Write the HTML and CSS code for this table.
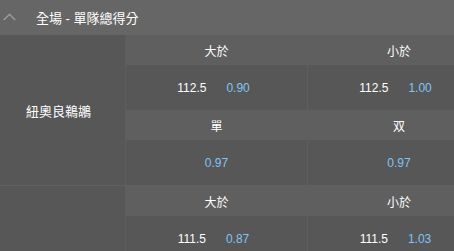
FILE: index.html
```html
<!DOCTYPE html>
<html>
<head>
<meta charset="utf-8">
<link rel="stylesheet" href="styles.css">
</head>
<body>
<div class="page">
  <div class="header">
    <svg class="chev" width="13" height="8" viewBox="0 0 13 8"><polyline points="0.8,7 6.5,1.2 12.2,7" fill="none" stroke="#9a9a9a" stroke-width="1.5"/></svg>
    <span class="title">全場 - 單隊總得分</span>
  </div>
  <div class="group">
    <div class="team">紐奧良鵜鶘</div>
    <div class="lines">
      <div class="row sub"><div class="cell">大於</div><div class="cell">小於</div></div>
      <div class="row val">
        <div class="cell pair"><span class="line">112.5</span><span class="odds">0.90</span></div>
        <div class="cell pair"><span class="line">112.5</span><span class="odds">1.00</span></div>
      </div>
      <div class="row sub"><div class="cell">單</div><div class="cell">双</div></div>
      <div class="row val">
        <div class="cell"><span class="odds">0.97</span></div>
        <div class="cell"><span class="odds">0.97</span></div>
      </div>
    </div>
  </div>
  <div class="group next">
    <div class="team"></div>
    <div class="lines">
      <div class="row sub"><div class="cell">大於</div><div class="cell">小於</div></div>
      <div class="row val">
        <div class="cell pair"><span class="line">111.5</span><span class="odds">0.87</span></div>
        <div class="cell pair"><span class="line">111.5</span><span class="odds">1.03</span></div>
      </div>
    </div>
  </div>
</div>
</body>
</html>
```
FILE: styles.css
```css
html, body {
  margin: 0;
  padding: 0;
  overflow: hidden;
  background: #575757;
}
body {
  font-family: "Liberation Sans", Arial, "Noto Sans CJK TC", sans-serif;
  font-size: 12px;
  color: #ffffff;
}
.page {
  width: 454px;
}
.header {
  height: 35px;
  background: #666666;
  display: flex;
  align-items: center;
  padding-left: 3px;
}
.chev {
  display: block;
  margin-right: 20px;
  margin-top: -2px;
}
.title {
  font-size: 13px;
  font-family: "Liberation Sans", "Noto Sans CJK TC", sans-serif;
}
.group {
  display: grid;
  grid-template-columns: 126px 1fr;
}
.group.next {
  border-top: 1px solid #5f5f5f;
}
.team {
  background: #575757;
  border-right: 1px solid #5e5e5e;
  display: flex;
  align-items: center;
  padding-left: 26px;
  font-size: 13px;
  font-family: "Liberation Sans", "Noto Sans CJK TC", sans-serif;
}
.lines {
  display: flex;
  flex-direction: column;
}
.row {
  display: grid;
  grid-template-columns: 182px 1fr;
}
.cell {
  display: flex;
  align-items: center;
  justify-content: center;
}
.cell:first-child {
  border-right: 1px solid #5e5e5e;
}
.cell:last-child {
  padding-left: 36px;
}
.row.sub {
  height: 30px;
  background: #5f5f5f;
}
.row.val {
  height: 45px;
  background: #575757;
}
.cell.pair {
  gap: 20px;
  padding-right: 6px;
}
.cell.pair:last-child {
  padding-right: 7px;
}
.odds {
  color: #80c4f2;
}
```
